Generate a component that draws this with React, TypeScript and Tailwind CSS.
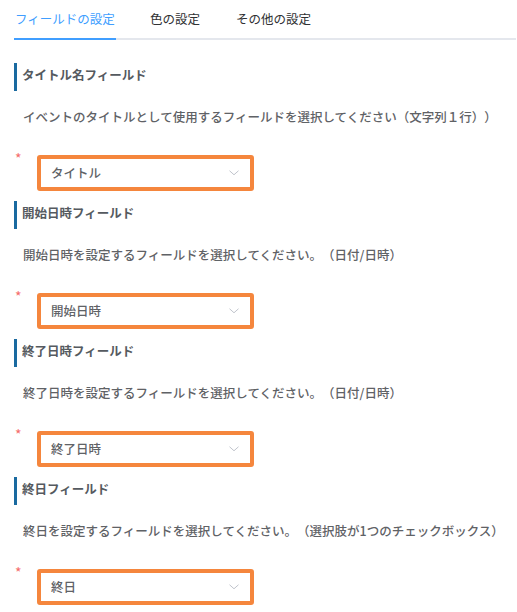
import React from "react";

const sections = [
  {
    title: "タイトル名フィールド",
    description: "イベントのタイトルとして使用するフィールドを選択してください（文字列１行））",
    value: "タイトル",
  },
  {
    title: "開始日時フィールド",
    description: "開始日時を設定するフィールドを選択してください。（日付/日時）",
    value: "開始日時",
  },
  {
    title: "終了日時フィールド",
    description: "終了日時を設定するフィールドを選択してください。（日付/日時）",
    value: "終了日時",
  },
  {
    title: "終日フィールド",
    description: "終日を設定するフィールドを選択してください。（選択肢が1つのチェックボックス）",
    value: "終日",
  },
];

export default function App() {
  return (
    <div className="h-[612px] w-[517px] overflow-hidden bg-white font-['Noto_Sans_CJK_JP','Noto_Sans',sans-serif] text-[12.5px] [text-spacing-trim:space-all]">
      <div className="ml-[14px] mr-[1px] flex h-[40px] border-b-2 border-[#e4e7ed]">
        <div className="-mb-[2px] w-[102px] border-b-2 border-[#409eff] text-center leading-[38px] text-[#409eff]">
          フィールドの設定
        </div>
        <div className="ml-[34px] leading-[38px] text-[#303133]">色の設定</div>
        <div className="ml-[36px] leading-[38px] text-[#303133]">その他の設定</div>
      </div>

      <div className="mt-[23px] flex flex-col gap-[10px]">
        {sections.map((s) => (
          <Section key={s.title} {...s} />
        ))}
      </div>
    </div>
  );
}

function Section({
  title,
  description,
  value,
}: {
  title: string;
  description: string;
  value: string;
}) {
  return (
    <div className="flex flex-col">
      <div className="ml-[14px] flex h-[28px] items-center border-l-[3px] border-[#1a6aa0] pb-[4px] pl-[5px] font-bold text-[#555a60]">
        {title}
      </div>
      <p className="mt-[16px] whitespace-nowrap pl-[23px] leading-[20px] font-medium text-[#5f6266]">
        {description}
      </p>
      <div className="mt-[28px] flex pl-[14px]">
        <span className="-mt-[5px] w-[23px] pl-[1px] text-[14px] leading-[16px] text-[#f56c6c]">*</span>
        <div className="flex h-[36px] w-[217px] items-center justify-between rounded-[3px] border-4 border-[#f5863d] pl-[10px] pr-[11px]">
          <span className="font-medium text-[#606266]">{value}</span>
          <svg width="10" height="6" viewBox="0 0 10 6" fill="none">
            <path d="M0.5 0.75 L5 4.75 L9.5 0.75" stroke="#c0c4cc" strokeWidth="1" />
          </svg>
        </div>
      </div>
    </div>
  );
}
